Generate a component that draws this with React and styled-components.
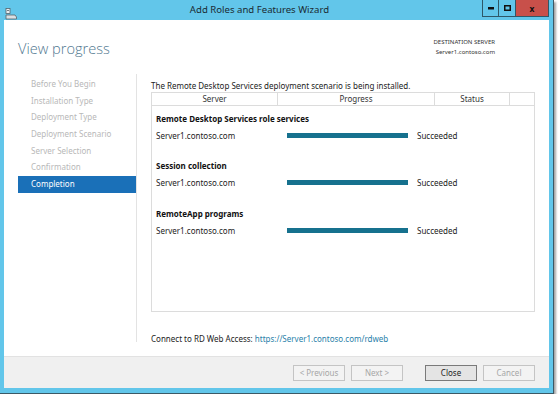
import React from "react";
import styled, { createGlobalStyle } from "styled-components";

const Global = createGlobalStyle`
  html, body { margin: 0; padding: 0; background: #ffffff; }
  body { font-family: "Noto Sans", "Open Sans", sans-serif; }
  * { box-sizing: border-box; }
`;

const Window = styled.div`
  width: 554px;
  height: 394px;
  background: #62c6ea;
  border-right: 1px solid #3b5966;
  border-bottom: 1px solid #3b5966;
  box-shadow: 2px 2px 2px rgba(90, 90, 90, 0.55);
  display: flex;
  flex-direction: column;
  padding: 0 4px 5px 4px;
`;

const TitleBar = styled.div`
  height: 20px;
  display: flex;
  align-items: flex-start;
`;

const AppIcon = styled.div`
  width: 12px;
  height: 12px;
  margin-top: 3px;
  margin-left: 1px;
`;

const Title = styled.div`
  flex: 1;
  text-align: center;
  font-size: 9.6px;
  line-height: 20px;
  color: #1b2b33;
  padding-left: 20px;
`;

const Controls = styled.div`
  display: flex;
  height: 17px;
`;

const CtrlBtn = styled.div`
  width: ${(p) => (p.$close ? "33px" : "17px")};
  height: 17px;
  background: ${(p) => (p.$close ? "#c8504a" : "transparent")};
  border: 1px solid #2e5868;
  border-top: none;
  border-left: ${(p) => (p.$first ? "1px solid #2e5868" : "none")};
  display: flex;
  align-items: center;
  justify-content: center;
  color: #111;
  font-size: 8.5px;
  font-weight: bold;
`;

const Client = styled.div`
  flex: 1;
  background: #ffffff;
  display: flex;
  flex-direction: column;
`;

const Header = styled.div`
  height: 54px;
  display: flex;
  justify-content: space-between;
  align-items: flex-start;
  padding: 0 54px 0 14px;
`;

const PageTitle = styled.div`
  font-family: "Open Sans", sans-serif;
  font-weight: 300;
  font-size: 14.6px;
  color: #50778f;
  margin-top: 18px;
`;

const Dest = styled.div`
  margin-top: 17px;
  text-align: right;
  font-size: 6px;
  line-height: 10px;
  color: #333;
`;

const Body = styled.div`
  flex: 1;
  display: flex;
`;

const Nav = styled.div`
  width: 133px;
  padding-left: 14px;
  padding-top: 2px;
  border-right: 1px solid #e3e3e3;
  margin-bottom: 14px;
`;

const NavItem = styled.div`
  height: 16.67px;
  line-height: 16.67px;
  padding-left: 13px;
  font-size: 8px;
  color: ${(p) => (p.$active ? "#ffffff" : "#b8b8b8")};
  background: ${(p) => (p.$active ? "#1a70b8" : "transparent")};
`;

const Main = styled.div`
  flex: 1;
  padding: 6px 14px 0 14px;
  display: flex;
  flex-direction: column;
`;

const Intro = styled.div`
  font-size: 8px;
  color: #222;
  line-height: 11px;
  margin-bottom: 1px;
`;

const Table = styled.div`
  height: 220px;
  border: 1px solid #dcdcdc;
  display: flex;
  flex-direction: column;
`;

const HeadRow = styled.div`
  display: grid;
  grid-template-columns: 126px 157px 75px 1fr;
  height: 13px;
  border-bottom: 1px solid #dcdcdc;
`;

const HeadCell = styled.div`
  font-size: 8px;
  line-height: 12px;
  text-align: center;
  color: #333;
  border-right: ${(p) => (p.$last ? "none" : "1px solid #dcdcdc")};
`;

const Group = styled.div`
  padding: 4px 0 0 4px;
  height: 47.4px;
`;

const GroupTitle = styled.div`
  font-size: 8px;
  font-weight: bold;
  color: #111;
  height: 17px;
  line-height: 17px;
`;

const Row = styled.div`
  display: grid;
  grid-template-columns: 131px 130px 1fr;
  align-items: center;
  height: 17px;
  font-size: 8px;
  color: #222;
`;

const Bar = styled.div`
  width: 121px;
  height: 5px;
  background: #16718e;
`;

const Spacer = styled.div`
  flex: 1;
`;

const Connect = styled.div`
  font-size: 8px;
  color: #222;
  margin-bottom: 12px;
`;

const Link = styled.span`
  color: #2a7fa9;
`;

const Footer = styled.div`
  height: 32px;
  background: #f0f0f0;
  border-top: 1px solid #e2e2e2;
  display: flex;
  align-items: center;
  justify-content: flex-end;
  padding: 0 14px 0 0;
  gap: 6px;
`;

const Button = styled.div`
  width: 52px;
  height: 16px;
  border: 1px solid ${(p) => (p.$primary ? "#7a7a7a" : "#c4c4c4")};
  background: ${(p) => (p.$primary ? "#e4e4e4" : "#f3f3f3")};
  color: ${(p) => (p.$primary ? "#222" : "#a6a6a6")};
  font-size: 8px;
  display: flex;
  align-items: center;
  justify-content: center;
  margin-left: ${(p) => p.$ml || "0px"};
`;

const steps = [
  "Before You Begin",
  "Installation Type",
  "Deployment Type",
  "Deployment Scenario",
  "Server Selection",
  "Confirmation",
  "Completion",
];

const groups = [
  "Remote Desktop Services role services",
  "Session collection",
  "RemoteApp programs",
];

export default function App() {
  return (
    <>
      <Global />
      <Window>
        <TitleBar>
          <AppIcon>
            <svg width="12" height="12" viewBox="0 0 12 12">
              <rect x="1" y="0.5" width="4" height="5" fill="#e8eef2" stroke="#55636b" strokeWidth="0.8" />
              <rect x="2" y="2" width="2" height="0.8" fill="#55636b" />
              <path d="M1 7 h9 l1.5 2 v2 h-10.5 z" fill="#d9dfe3" stroke="#55636b" strokeWidth="0.8" />
            </svg>
          </AppIcon>
          <Title>Add Roles and Features Wizard</Title>
          <Controls>
            <CtrlBtn $first>
              <svg width="6" height="3"><rect width="6" height="2.5" fill="#111" /></svg>
            </CtrlBtn>
            <CtrlBtn>
              <svg width="7" height="6"><rect x="0.75" y="0.75" width="5.5" height="4.5" fill="none" stroke="#111" strokeWidth="1.5" /></svg>
            </CtrlBtn>
            <CtrlBtn $close>x</CtrlBtn>
          </Controls>
        </TitleBar>
        <Client>
          <Header>
            <PageTitle>View progress</PageTitle>
            <Dest>
              DESTINATION SERVER
              <br />
              Server1.contoso.com
            </Dest>
          </Header>
          <Body>
            <Nav>
              {steps.map((s, i) => (
                <NavItem key={s} $active={i === steps.length - 1}>
                  {s}
                </NavItem>
              ))}
            </Nav>
            <Main>
              <Intro>The Remote Desktop Services deployment scenario is being installed.</Intro>
              <Table>
                <HeadRow>
                  <HeadCell>Server</HeadCell>
                  <HeadCell>Progress</HeadCell>
                  <HeadCell>Status</HeadCell>
                  <HeadCell $last />
                </HeadRow>
                {groups.map((g) => (
                  <Group key={g}>
                    <GroupTitle>{g}</GroupTitle>
                    <Row>
                      <span>Server1.contoso.com</span>
                      <Bar />
                      <span>Succeeded</span>
                    </Row>
                  </Group>
                ))}
              </Table>
              <Spacer />
              <Connect>
                Connect to RD Web Access: <Link>https://Server1.contoso.com/rdweb</Link>
              </Connect>
            </Main>
          </Body>
          <Footer>
            <Button>&lt; Previous</Button>
            <Button>Next &gt;</Button>
            <Button $primary $ml="16px">Close</Button>
            <Button>Cancel</Button>
          </Footer>
        </Client>
      </Window>
    </>
  );
}
